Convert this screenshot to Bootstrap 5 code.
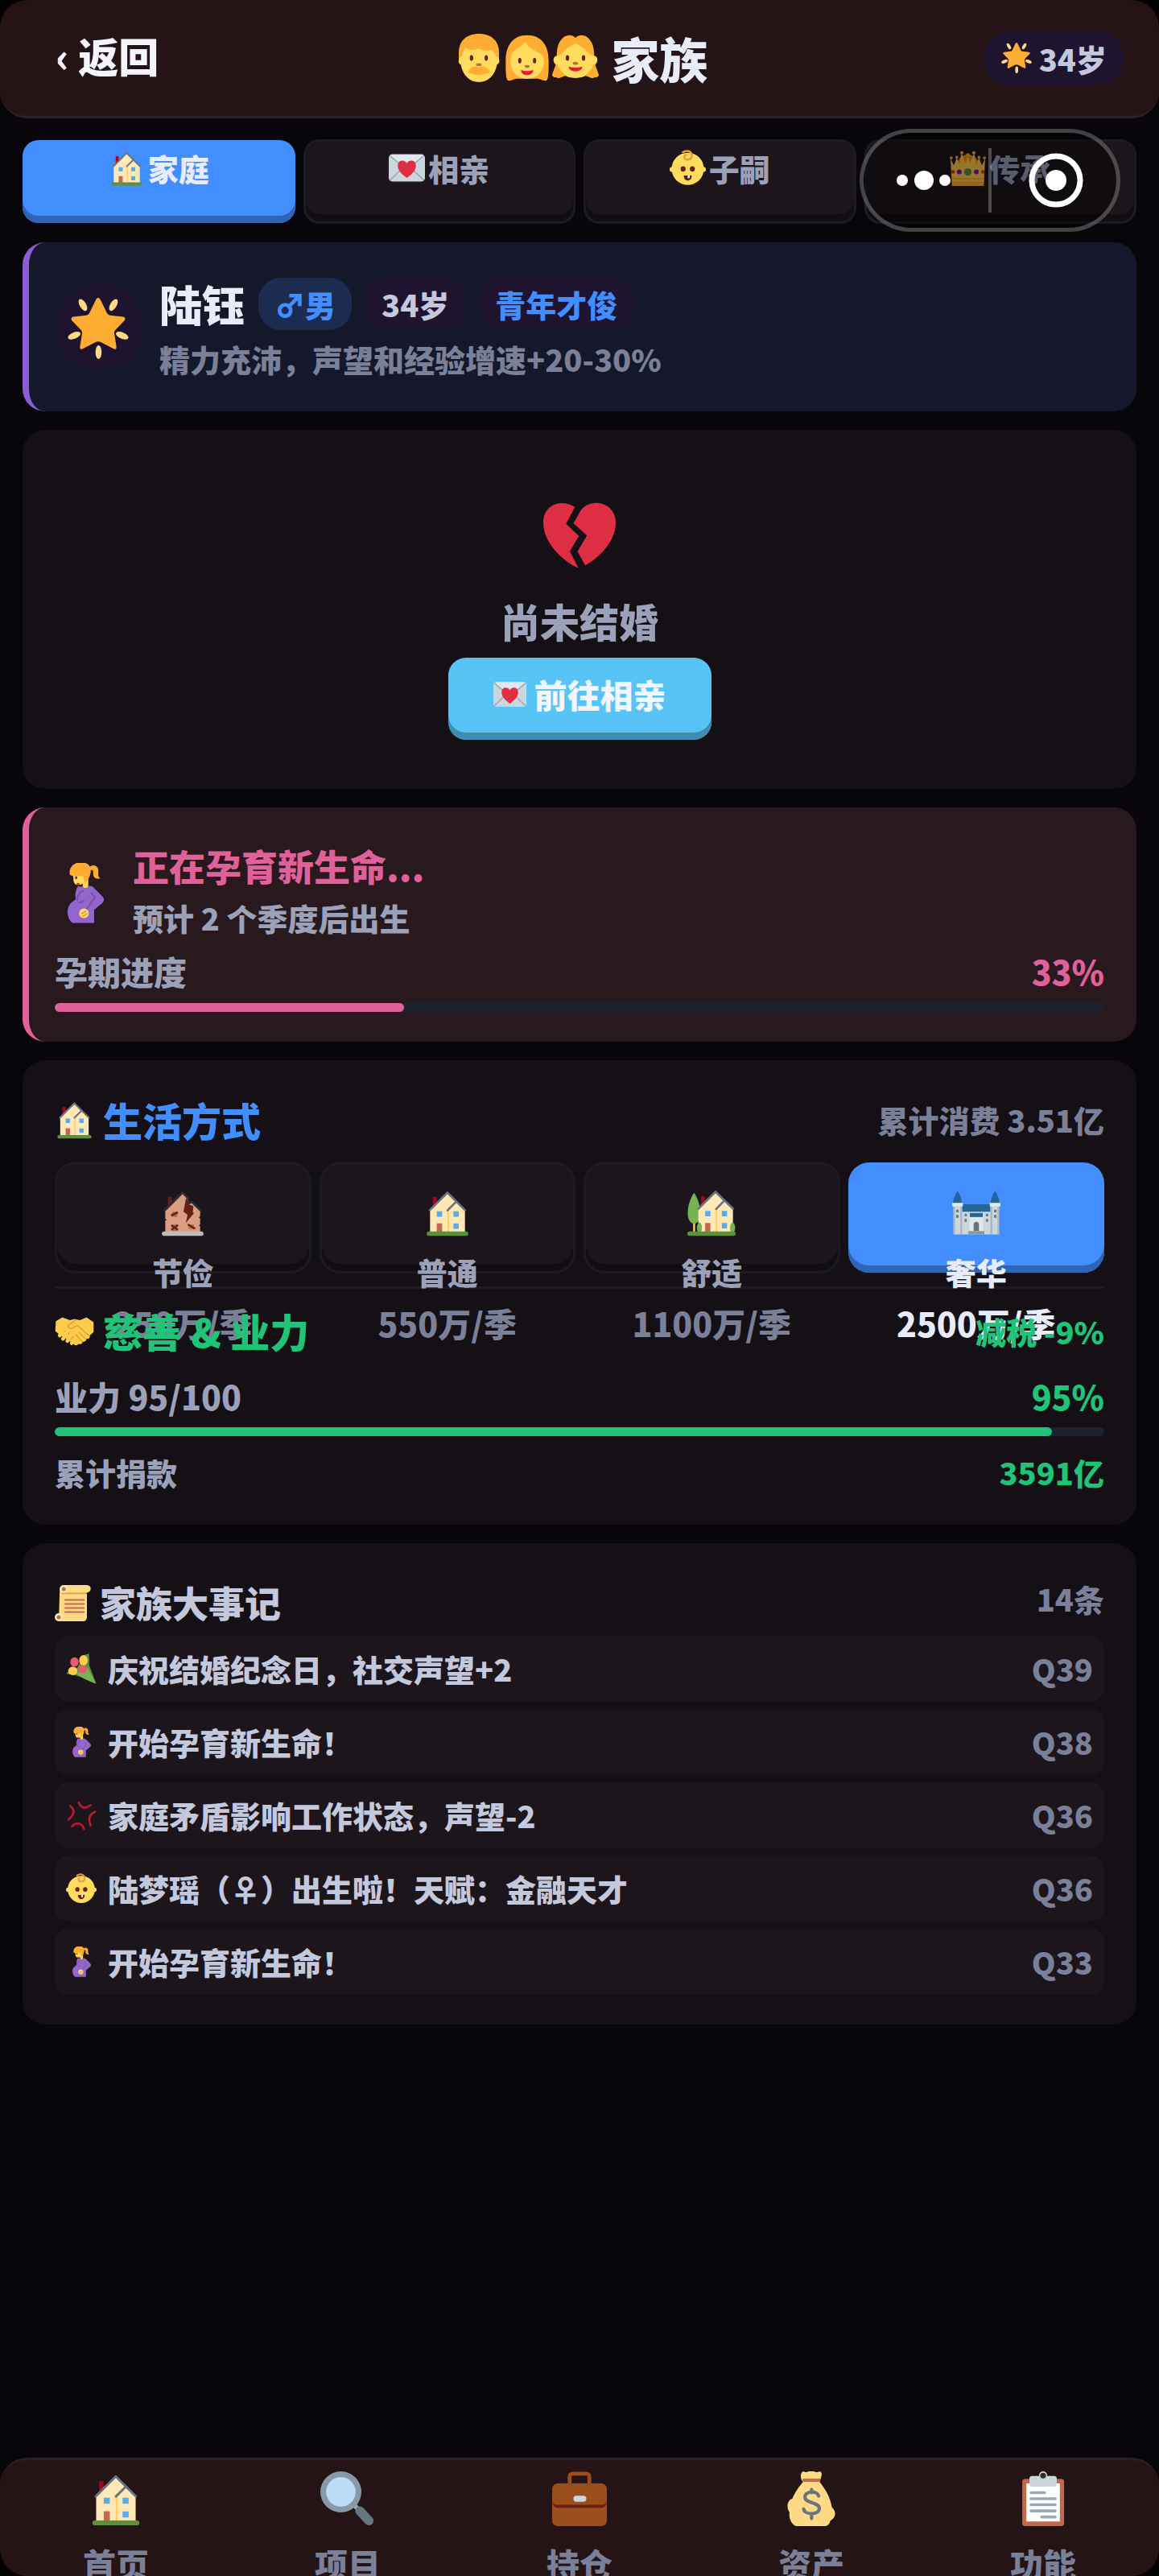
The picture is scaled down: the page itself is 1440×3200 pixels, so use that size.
<!DOCTYPE html>
<html lang="zh-CN">
<head>
<meta charset="utf-8">
<meta name="viewport" content="width=device-width, initial-scale=1">
<title>家族</title>
<link href="https://cdn.jsdelivr.net/npm/bootstrap@5.3.0/dist/css/bootstrap.min.css" rel="stylesheet">
<style>
:root{--blue:#428eff;--green:#20c478;--pink:#e0609a;--hi:#e8ebf8;--soft:#c3c8dd;--mid:#9ca1ba;--dim:#7b8099;--line:#1b1b27;--raise:#1c151b;--f-sm:38px;--f-md:41px;--f-lg:45px;--f-xl:49px}
body{background:#000;color:var(--hi);font-family:"Noto Sans CJK SC",sans-serif;font-weight:900;font-size:var(--f-sm);line-height:1.5}
.fw-heavy{font-weight:900}
.screen{min-height:100vh;background:#08060b}
.top-shade{background:linear-gradient(#000 50%,transparent 50%)}
.bottom-shade{background:linear-gradient(transparent 50%,#000 50%)}
.topbar,.bottombar{height:147px;background:#251416;border-radius:34px}
.topbar{border-bottom:3px solid #2a2029;padding:0 45px}
.side{flex:1 1 0}
.ico{width:1em;height:1em;flex:none;display:block}
.back{background:none;border:0;color:#f4f5fc;font-weight:900;font-size:50px;line-height:68px;padding:0 24px 8px}
.title{font-size:60px;line-height:84px;gap:15px;padding-left:4px}
.pill{font-size:var(--f-sm);line-height:65px;padding:0 20px;border-radius:28px;background:#1e1430;color:var(--soft);gap:9px}
.pill-male{background:#1b2c50;color:var(--blue)}
.t-blue{color:var(--blue)}.t-green{color:var(--green)}.t-pink{color:var(--pink)}.t-mid{color:var(--mid)}.t-dim{color:var(--dim)}.t-soft{color:var(--soft)}
.f-md{font-size:var(--f-md)}.f-lg{font-size:var(--f-lg)}.f-xl{font-size:var(--f-xl)}
.content{padding:26px 28px 0;gap:23px}
.tabs,.options{gap:10px}
.tile{flex:1 1 0;min-width:0;background:var(--raise);border:3px solid var(--line);color:var(--mid);font-weight:900;box-shadow:inset 0 -9px #110d11}
.tile.on{background:var(--blue);border-width:0;margin:1px 0;color:var(--hi);box-shadow:inset 0 -9px #2f65b4}
.tab{height:105px;border-radius:20px;padding:4px 0 0;font-size:var(--f-sm);line-height:57px;gap:4px}
.tab.on{height:103px;padding:6px 3px 0}
.tab .ico{width:45px;height:45px;margin-top:6px}
.panel{background:#151015;border-radius:28px;padding:37px 40px}
.edge{border-left:8px solid;padding-left:32px}
.me{background:#15182a;border-color:#8b5cd6}
.baby{background:#27191e;border-color:var(--pink)}
.avatar{width:108px;height:108px;border-radius:50%;background:#1e1430;font-size:76px;padding-top:4px}
.gap-me{gap:22px}
.nm{font-size:53px;line-height:79px}
.pills{gap:17px}
.single{padding:60px 40px 61px}
.heart{font-size:90px;padding:26px 0}
.cta{background:#58c3f5;border:0;border-radius:22px;box-shadow:inset 0 -9px #3e8cb0;color:#f3f6fd;font-weight:900;font-size:var(--f-md);line-height:91px;padding:0 56px 11px;gap:10px;margin-top:12px}
.expect{line-height:71px}
.carry{font-size:75px;margin-top:10px}
.meter{height:11px;border-radius:6px;background:#1e2130;margin-top:8px}
.meter .progress-bar{border-radius:6px}
.bar-pink{background:var(--pink)}.bar-green{background:var(--green)}
.row-gap{margin-top:8px}
.options{margin-top:16px}
.option{height:139px;border-radius:26px;padding:15px 0 0;font-size:var(--f-sm);line-height:57px}
.option.on{height:137px;padding:17px 3px 0}
.option .ico{width:60px;height:60px;margin:15px 0}
.price{font-size:var(--f-md);line-height:62px;margin-top:4px}
.rule{height:3px;background:var(--line);margin:16px 0 15px}
.karma{margin-top:14px}
.sec{gap:11px}
.chronicle{padding-top:40px}
.log{gap:9px;margin-top:7px}
.entry{background:var(--raise);border-radius:16px;padding:0 14px;line-height:82px;gap:14px}
.bottombar{border-top:3px solid #2a2029;overflow:hidden}
.dock{flex:1 1 0;color:var(--dim);font-size:var(--f-md);line-height:62px;text-decoration:none;padding-top:14px}
.dock .ico{width:68px;height:68px;margin-bottom:15px}
.capsule{position:absolute;top:160px;right:48px;width:324px;height:128px;border:5px solid rgba(255,255,255,.25);border-radius:64px;background:rgba(0,0,0,.42)}
.capsule svg{width:100%;height:100%;display:block}
</style>
</head>
<body>
<svg width="0" height="0" class="position-absolute" aria-hidden="true">
<defs>
<symbol id="house" viewBox="0 0 36 36"><path fill="#A0041E" d="M7 6.500h3V14H7z"/><path fill="#FFE8B6" d="M5 16.500L17.900 3.800 24.500 10.500 31 16.500V33H5z"/><path fill="#FFCC4D" d="M18 16h1v17h-1z"/><path fill="none" stroke="#66757F" stroke-width="1.600" stroke-linecap="round" stroke-linejoin="round" d="M4.800 16.400L17.900 3.300 31.100 16.400M24.300 10.300L18 16.500"/><path fill="#55ACEE" d="M10 17.300h4v4h-4zM22.400 17.300h4v4h-4zM22.400 26.300h4v4h-4z"/><path fill="#C1694F" d="M10 26.200h4V33h-4z"/><rect x="2.500" y="32.300" width="31" height="3.200" rx="1.600" fill="#5C913B"/></symbol>
<symbol id="ruin" viewBox="0 0 36 36"><path fill="#662113" d="M7 6.500h3V14H7z"/><path fill="#D99E82" d="M5 16.500L17.900 3.500l4 4v4l3-1L31 16.500V21l-1.200.7 1.200.8V27l-1 .7 1 .8V33H5V24l1.500-.5L5 23z"/><path fill="none" stroke="#292F33" stroke-width="1.700" stroke-linecap="round" stroke-linejoin="round" d="M4.800 16.300L17.900 3.300 22 7.300v4l3-1 6.100 6"/><path fill="#662113" d="M20.500 7l1.800 5 3.700 1.300-.5 4.700 1 .5L20.300 26l1.300-6.200-3-2.300z"/><g fill="#C1694F"><path d="M10 17.500h4v4h-4zM22.400 27h4v3.500h-4zM10 27h4v5h-4z"/></g><path stroke="#662113" stroke-width="1.500" d="M9.400 20.400l5-2.400M21.800 27l5.400 3.200M9.500 27.600l5 3.500M9.500 31l5-3.600"/><rect x="2.500" y="32.300" width="31" height="3.200" rx="1.600" fill="#BBB"/></symbol>
<symbol id="garden" viewBox="0 0 36 36"><path fill="#FFCC4D" d="M4.300 24h1.500v9H4.300z"/><path fill="#77B255" d="M5 3.500C7.500 7 9.700 13 9.700 18.500S7.500 26.500 5 26.500.3 24 .3 18.500 2.500 7 5 3.500z"/><path fill="#A0041E" d="M10.300 6h2.600v7h-2.600z"/><path fill="#FFE8B6" d="M8.200 15.500L21 3.500l13 12V33H8.200z"/><path fill="#FFCC4D" d="M21.200 16h1v17h-1z"/><path fill="none" stroke="#66757F" stroke-width="1.600" stroke-linecap="round" stroke-linejoin="round" d="M8.200 15.300L21 2.700l13 12.600M27.300 9.500L21.500 15.500"/><path fill="#55ACEE" d="M13.300 17h3.900v4h-3.900zM25.700 17h3.900v4h-3.900zM25.700 26h3.900v4h-3.900z"/><path fill="#C1694F" d="M13.300 26h3.900v7h-3.900z"/><ellipse cx="9" cy="29.500" rx="1.900" ry="3.800" fill="#77B255"/><ellipse cx="33.700" cy="29.500" rx="1.900" ry="3.800" fill="#77B255"/><rect x="0" y="32.300" width="36" height="3.200" rx="1.600" fill="#5C913B"/></symbol>
<symbol id="castle" viewBox="0 0 36 36"><path fill="#226699" d="M4 2C6 5 7.300 9 7.500 12h-7C.700 9 2 5 4 2zM32 2c2 3 3.300 7 3.500 10h-7c.2-3 1.500-7 3.500-10z"/><path fill="#CCD6DD" d="M1 12h6.500v5h21v-5H35v22.500H1z"/><path fill="#226699" d="M7.500 12h21v5.500h-21z"/><path fill="#AAB8C2" d="M1 14h1.300v20.500H1zM6 14h1.500v20.500H6zM28.500 14H30v20.500h-1.500zM33.700 14H35v20.500h-1.300z"/><path fill="#E1E8ED" d="M0 11h8v2.500H0zM28 11h8v2.500h-8zM13 21h10v11H13z"/><path fill="#226699" d="M13.200 18.500h9.600v3h-9.600z"/><path fill="#66757F" d="M3 16h1.800v2H3zM3 20h1.800v2H3zM31.200 16H33v2h-1.800zM31.200 20H33v2h-1.800zM9.300 19h1.600v2H9.300zM9.300 23h1.600v2H9.300zM25.200 19h1.600v2h-1.600zM25.200 23h1.600v2h-1.600zM16 32v-4.500a2 2.500 0 0 1 4 0V32z"/><path fill="#8899A6" d="M12 32h12v2.500H12z"/></symbol>
<symbol id="letter" viewBox="0 0 36 36"><rect y="4.500" width="36" height="27" rx="3.500" fill="#CCD6DD"/><path fill="#E1E8ED" d="M1 6c.7-1 1.500-1.500 2.500-1.500h29c1 0 1.800.5 2.500 1.500L18 20z"/><path stroke="#99AAB5" stroke-width="1.300" d="M1 5.800L18 20 35 5.800M1 30.500L14 18M35 30.500L22 18" fill="none"/><path fill="#DD2E44" d="M18 28c-5-3.500-9-7.500-9-12 0-6.500 7-6.500 9-2.500 2-4 9-4 9 2.500 0 4.500-4 8.500-9 12z"/></symbol>
<symbol id="babyface" viewBox="0 0 36 36"><circle cx="2.600" cy="19.500" r="2.600" fill="#FFDC5D"/><circle cx="33.400" cy="19.500" r="2.600" fill="#FFDC5D"/><ellipse cx="18" cy="19" rx="16" ry="16" fill="#FFDC5D"/><path fill="none" stroke="#EF9645" stroke-width="1.900" stroke-linecap="round" d="M13 2.500c5-3 9.500-.5 9 4-.5 4-7 4.500-7.500.8 0-1.500 1-2 1.800-1.800"/><ellipse cx="13.400" cy="19" rx="2.500" ry="2.700" fill="#662113"/><ellipse cx="22.600" cy="19" rx="2.500" ry="2.700" fill="#662113"/><path fill="#662113" d="M14 25.500h8c0 3-1.500 5-4 5s-4-2-4-5z"/><path fill="#fff" d="M18 25.500h2v2.700h-2z"/></symbol>
<symbol id="crown" viewBox="0 0 36 36"><path fill="#F4900C" d="M7 12l4-5 7-3 7 3 5 6-2 8H8z"/><path fill="#FFCC4D" d="M2 33L.8 8.500l3.200 7 3-7.500 2.500 7L11.700 3l4 10.500L18 6l2.300 7.500L24.300 3l2.200 12L29 8l3 7.500 3.200-7L34 33z"/><g fill="#FFAC33"><circle cx="1.500" cy="8" r="1.500"/><circle cx="7" cy="7.500" r="1.500"/><circle cx="12" cy="3" r="1.700"/><circle cx="18" cy="5" r="1.700"/><circle cx="24" cy="3" r="1.700"/><circle cx="29" cy="7.500" r="1.500"/><circle cx="34.500" cy="8" r="1.500"/><path d="M2 28h32v1.500H2zM2 31.500h32V36H2z"/></g><circle cx="18" cy="22" r="3.700" fill="#5C913B"/><circle cx="9.500" cy="22" r="2.400" fill="#9400D3"/><circle cx="26.500" cy="22" r="2.400" fill="#9400D3"/><circle cx="3.200" cy="22" r="1.800" fill="#DD2E44"/><circle cx="32.800" cy="22" r="1.800" fill="#DD2E44"/></symbol>
<symbol id="star" viewBox="0 0 36 36"><path fill="#FFAC33" d="M18 0c.8 0 1.200.8 1.600 1.700l3.400 7c.5.900 1 1.500 2 1.600l7.500.8c1.600.2 1.700 1.500.7 2.500l-5 5.200c-.7.700-.8 1.400-.7 2.300l1.200 7.400c.2 1.600-.6 2.100-1.900 1.400L20 26.300c-1.500-.8-2.500-.8-4 0l-6.800 3.600c-1.300.7-2.100.2-1.900-1.400l1.200-7.400c.1-.9 0-1.600-.7-2.300l-5-5.200c-1-1-.9-2.300.7-2.500l7.500-.8c1-.1 1.500-.7 2-1.600l3.400-7C16.800.8 17.200 0 18 0z"/><g fill="#FFD983"><ellipse cx="9" cy="4.200" rx="1.900" ry="3.900" transform="rotate(-30 9 4.200)"/><ellipse cx="27" cy="4.200" rx="1.900" ry="3.900" transform="rotate(30 27 4.200)"/><ellipse cx="3.900" cy="22.200" rx="1.900" ry="3.900" transform="rotate(68 3.900 22.200)"/><ellipse cx="32.100" cy="22.200" rx="1.900" ry="3.900" transform="rotate(-68 32.100 22.200)"/><ellipse cx="18.200" cy="32" rx="1.800" ry="4"/></g></symbol>
<symbol id="man" viewBox="0 0 36 36"><path fill="#FFAC33" d="M18 0C8 0 3 6 3 14v7h30v-7C33 6 28 0 18 0z"/><path fill="#FFDC5D" d="M5 17c1-2 2-6 3-7 3 3 7 2 10 1 3 2 6 2 9 1 2 1 3 3 4 5 3 1 3 5 .5 6C30 31 25 36 18 36S6 31 4.500 23C2 22 2.500 18 5 17z"/><path fill="#FFAC33" d="M18 25c3-1.500 7-.5 8 4-1.500.8-2.500 0-3.500 1.300-1.200-.8-2 .6-3 .2-.8.5-2.200.5-3 0-1 .4-1.800-1-3-.2C12.500 29 11.500 29.800 10 29c1-4.500 5-5.500 8-4z"/><ellipse cx="12.500" cy="18" rx="1.300" ry="2.100" fill="#662113"/><ellipse cx="23.500" cy="18" rx="1.300" ry="2.100" fill="#662113"/><ellipse cx="18" cy="23" rx="2.200" ry="1.100" fill="#C1694F"/></symbol>
<symbol id="woman" viewBox="0 0 36 36"><path fill="#FFAC33" d="M18 1C7 1 2 9 2 20c0 6 0 12 1 14 1 2 3 .5 7-.5h16c4 1 6 2.500 7 .5 1-2 1-8 1-14C34 9 29 1 18 1z"/><path fill="#FFDC5D" d="M5.500 20c0-5 2-7 5-9 3-1.800 5-3 6-5 2 4 6 6 9 7.500 3 1.500 5 3 5 6.500 0 8-5 13.500-12.500 13.500S5.500 28 5.500 20z"/><ellipse cx="12.500" cy="20" rx="1.200" ry="2.100" fill="#662113"/><ellipse cx="23.500" cy="20" rx="1.200" ry="2.100" fill="#662113"/><ellipse cx="18" cy="24.300" rx="1.900" ry="1.100" fill="#C1694F"/><path fill="#DF1F32" d="M13.500 27c3 1 6 1 9 0 .3 2-1.700 3.800-4.500 3.800S13.200 29 13.500 27z"/></symbol>
<symbol id="girl" viewBox="0 0 36 36"><path fill="#FFAC33" d="M18 3C21 0 26 .500 29 5c2.500 3 3 8 3 13 0 5 2.500 9 3.500 13-1 1-1.500 1.500-2.500 1.500-.8-1-1.500.5-2.500.5L26 26H10l-4.500 7c-1 0-1.700-1.500-2.500-.5-1 0-1.500-.5-2.500-1.500 1-4 3.500-8 3.500-13 0-5 .5-10 3-13 3-4.500 8-5 11-2z"/><path fill="#FFDC5D" d="M3.500 16.500c2 0 5-2 7.500-5 2-2 5-3 7-4.500 2 1.500 5 2.500 7 4.500 2.500 3 5.500 5 7.500 5 2.500 1 2.500 5 0 6.500-1.500 6-7 10-14.500 10S5 29 3.500 23C1 21.500 1 17.500 3.500 16.500z"/><path fill="#FFAC33" d="M4 22c2 4 4 7 7 9l-5 2c-2 0-4-1-4.500-3zM32 22c-2 4-4 7-7 9l5 2c2 0 4-1 4.500-3z"/><ellipse cx="12" cy="18" rx="1.300" ry="2.100" fill="#662113"/><ellipse cx="24" cy="18" rx="1.300" ry="2.100" fill="#662113"/><ellipse cx="18" cy="22" rx="2" ry="1.100" fill="#C1694F"/><path fill="#DF1F32" d="M13 24.500c3.300 1 6.700 1 10 0 .3 2-2 3.500-5 3.500s-5.300-1.500-5-3.500z"/></symbol>
<symbol id="broken" viewBox="0 0 36 36"><path fill="#DD2E44" d="M15.700 4L11.300 12.300l6.400 6L13.200 26l4.300 8.300C8 30 0 20.500 0 11.800 0 2.300 9.500-.2 15.700 4zM18.800 5.300L15 12l6.700 6.100L17 26l3.800 6.900C29 28.500 36 20 36 11.800 36 1.500 24-1 18.800 5.300z"/></symbol>
<symbol id="mother" viewBox="0 0 36 36"><path fill="#FFAC33" d="M20.500 3c1.500-3 6-1.500 5.500 2 0 2-.3 3 1.200 4.200C24 10 22.500 8 23 5.500c0-1.500-1-1.700-2.500-.5z"/><path fill="#FFDC5D" d="M10.500 6l9.500-2v10.500c0 1.800-3.300 1.800-3.300 0v-2c-4 1.800-6-.5-5.500-3.500z"/><path fill="#FFAC33" d="M9 7C7.500-1.500 20-2.500 21.300 3c.8 3.500-1 6.500-3 9.200-1-1.200-.8-3.200-1.300-4.700-1 1-2 .5-2.500 0-1.500 1-4 .5-5.500-.5z"/><path fill="#9266CC" d="M13.500 14h3c1.500 1.500 3 1 4-.3 1.500 0 2.500.5 3.200 1.500l5 5c1 1.200.8 2.600-.2 3.600L23.500 28v7.700H10.500c-3-2.500-3.700-7.500-1.800-10.500 1.200-2 2.800-2.500 3.800-3.700-.5-2.700 0-5 1-7.500z"/><path fill="none" stroke="#7450A8" stroke-width=".9" d="M13.300 22.500c0-3 1.500-5.500 4-6M14 23.500c2 0 3-.6 3.500-1.500M21.500 17.500l2.500 3-5 7"/><circle cx="17.400" cy="30" r="2.900" fill="#FFDC5D"/><path d="M15.800 30.500l3-2M16.500 32l3-2" stroke="#EF9645" stroke-width=".8"/><ellipse cx="12.800" cy="8.800" rx=".6" ry=".9" fill="#662113"/><path fill="#DF1F32" d="M13 12h1.800v1H13.300z"/></symbol>
<symbol id="shake" viewBox="0 0 36 36"><path fill="#FFCC4D" d="M1 9l6-3.500L14 8l4-1 5 1 6-2.500L35.500 10v9L32 22c.5 2-1 3.500-3 3-.2 2-1.500 3-3.500 2.700-.3 2-2 2.800-3.800 2-1.200 1.800-3.700 1.500-4.700-.2L4 21 .5 18z"/><path fill="none" stroke="#E29A2D" stroke-width="1" stroke-linecap="round" d="M19 8l-7 5c0 3 4 3.500 6 1l3-1 10 9M22 19l6 6M19 21l6 6.500M9 18l-4 5M13 20l-5 6M17 23l-5 5"/><path fill="none" stroke="#FFCC4D" stroke-width="3.400" stroke-linecap="round" d="M7 19l-2.500 3M10.500 21l-3 4M14 23l-2.500 4M17.500 26l-2 3"/></symbol>
<symbol id="scroll" viewBox="0 0 36 36"><path fill="#FFD983" d="M5 4c0-2 2-4 4-4h23c5 0 5 7 0 7.500V32c0 2-1.500 4-3.500 4H4z"/><path fill="#E39F3D" d="M10 7.500h22V9H7V7z"/><circle cx="9" cy="4" r="4" fill="#FFE8B6"/><circle cx="9" cy="4" r="2" fill="#C1694F"/><circle cx="4" cy="32" r="4" fill="#FFE8B6"/><circle cx="4" cy="32" r="2" fill="#C1694F"/><path stroke="#C1694F" stroke-width="1.700" stroke-linecap="round" d="M10.500 14.800h18.500M10.500 18.800h18.500M10.500 22.800h18.500M10.500 26.800h18.500"/></symbol>
<symbol id="tulips" viewBox="0 0 36 36"><path fill="#5C913B" d="M0 24c4-3 5-9 13-7L20 4c2-3 5-3 7-4 0 5 1 8 0 13l8.500 22.500C26 33 17 25 0 24z"/><path fill="#77B255" d="M12 24l13-8 10.500 19.500C27 33 19 29 12 24z"/><g fill="#EA596E"><ellipse cx="10" cy="10" rx="5" ry="5.500"/><ellipse cx="19.500" cy="18.500" rx="5" ry="5"/></g><g fill="#FFCC4D"><ellipse cx="20.500" cy="8" rx="5" ry="6"/><ellipse cx="8" cy="20.500" rx="5.500" ry="5"/></g></symbol>
<symbol id="anger" viewBox="0 0 36 36"><path fill="none" stroke="#BE1931" stroke-width="2.500" stroke-linecap="round" stroke-linejoin="round" d="M15 3c2 6 8 8 14 3M5 7c6 5 5 10-2 16M34 14c-7 3-8 9-5 16M7 31c6-6 12-4 14 3"/></symbol>
<symbol id="lens" viewBox="0 0 36 36"><path stroke="#99AAB5" stroke-width="3" d="M20 20l6 6"/><path stroke="#66757F" stroke-width="6" stroke-linecap="round" d="M26 26l6 6.500"/><circle cx="13.500" cy="13.500" r="13.500" fill="#8899A6"/><circle cx="13.500" cy="13.500" r="9.700" fill="#BBDDF5"/></symbol>
<symbol id="brief" viewBox="0 0 36 36"><path fill="none" stroke="#9B4E1B" stroke-width="2.500" d="M11.500 9V3.500a2 2 0 0 1 2-2h9a2 2 0 0 1 2 2V9"/><rect y="8" width="36" height="28" rx="3.500" fill="#9B4E1B"/><path fill="#662113" d="M0 19c0 3 1.500 5 4 5h28c2.500 0 4-2 4-5z"/><path fill="#9B4E1B" d="M0 12h36v7c0 2-1.500 3-4 3H4c-2.500 0-4-1-4-3z"/><rect x="14" y="16" width="8.500" height="4" rx="2" fill="#CCD6DD"/></symbol>
<symbol id="money" viewBox="0 0 36 36"><path fill="#FFD983" d="M11.500 1c1.500-1.800 2.500 0 3.500-.5 2-.8 4-.8 6 0 1 .5 2.500-1.300 3.700.5.5 2-.7 3.500-1.200 6 4 5 7 10 8 16.500 3.300 3 2.700 7-1 9-.3 2-2 3.500-3.500 3.500H8c-3-1-5-5-4.300-9C1.500 24 2 19 5.500 18 7 14 10 10 12.500 7c-1.500-2-1.800-4-1-6z"/><path fill="#C1694F" d="M12.300 4.700h11.400v2.200H12.300z"/><path fill="none" stroke="#66757F" stroke-width="2.200" stroke-linecap="round" d="M22.800 16.200c-.8-3.700-9-3.500-9 .7 0 4.400 9.500 3 9.500 7.500 0 4.300-9.500 4.600-10.300.4M18.200 12v2M18.200 28v3"/></symbol>
<symbol id="clip" viewBox="0 0 36 36"><rect x="4.300" y="5" width="27.500" height="31" rx="1.800" fill="#C1694F"/><path fill="#fff" d="M7 8h22v25H7z"/><rect x="9" y="3" width="18" height="7" rx="1.800" fill="#CCD6DD"/><circle cx="18" cy="2.700" r="2.700" fill="#CCD6DD"/><circle cx="18" cy="2.800" r="1.900" fill="#292F33"/><path stroke="#99AAB5" stroke-width="1.900" stroke-linecap="round" d="M10 14h9M10 18h16M10 22h16M10 26h16M17 30h9"/></symbol>
</defs>
</svg>

<div class="screen position-relative d-flex flex-column">
  <div class="top-shade">
  <header class="topbar d-flex align-items-center">
    <div class="side"><button type="button" class="back">‹ 返回</button></div>
    <h1 class="title d-flex align-items-center fw-heavy m-0"><span class="d-flex"><svg class="ico"><use href="#man"/></svg><svg class="ico"><use href="#woman"/></svg><svg class="ico"><use href="#girl"/></svg></span>家族</h1>
    <div class="side d-flex justify-content-end"><span class="pill d-flex align-items-center"><svg class="ico"><use href="#star"/></svg>34岁</span></div>
  </header>
  </div>

  <main class="content d-flex flex-column">
    <nav class="tabs d-flex">
      <button type="button" class="tile tab on d-flex justify-content-center align-items-start"><svg class="ico"><use href="#house"/></svg>家庭</button>
      <button type="button" class="tile tab d-flex justify-content-center align-items-start"><svg class="ico"><use href="#letter"/></svg>相亲</button>
      <button type="button" class="tile tab d-flex justify-content-center align-items-start"><svg class="ico"><use href="#babyface"/></svg>子嗣</button>
      <button type="button" class="tile tab d-flex justify-content-center align-items-start"><svg class="ico"><use href="#crown"/></svg>传承</button>
    </nav>

    <section class="panel edge me d-flex align-items-center gap-me">
      <div class="avatar d-flex align-items-center justify-content-center flex-shrink-0"><svg class="ico"><use href="#star"/></svg></div>
      <div>
        <div class="pills d-flex align-items-center"><span class="nm">陆钰</span><span class="pill pill-male">♂男</span><span class="pill">34岁</span><span class="pill t-blue">青年才俊</span></div>
        <div class="t-dim">精力充沛，声望和经验增速+20-30%</div>
      </div>
    </section>

    <section class="panel single d-flex flex-column align-items-center">
      <div class="heart"><svg class="ico"><use href="#broken"/></svg></div>
      <div class="f-xl t-mid lh-sm py-1">尚未结婚</div>
      <button type="button" class="cta d-flex align-items-center"><svg class="ico"><use href="#letter"/></svg>前往相亲</button>
    </section>

    <section class="panel edge baby">
      <div class="d-flex align-items-center gap-me">
        <div class="carry"><svg class="ico"><use href="#mother"/></svg></div>
        <div><div class="f-lg expect t-pink">正在孕育新生命...</div><div class="t-mid">预计 2 个季度后出生</div></div>
      </div>
      <div class="row-gap d-flex justify-content-between f-md"><span class="t-mid">孕期进度</span><span class="t-pink">33%</span></div>
      <div class="progress meter" role="progressbar" aria-label="孕期进度" aria-valuenow="33" aria-valuemin="0" aria-valuemax="100"><div class="progress-bar bar-pink" style="width:33.3%"></div></div>
    </section>

    <section class="panel">
      <div class="d-flex justify-content-between align-items-center">
        <h2 class="sec f-xl t-blue d-flex align-items-center fw-heavy m-0 lh-base"><svg class="ico"><use href="#house"/></svg>生活方式</h2><span class="t-dim">累计消费 3.51亿</span>
      </div>
      <div class="options d-flex">
        <button type="button" class="tile option d-flex flex-column align-items-center"><svg class="ico"><use href="#ruin"/></svg><span>节俭</span><span class="price t-dim">250万/季</span></button>
        <button type="button" class="tile option d-flex flex-column align-items-center"><svg class="ico"><use href="#house"/></svg><span>普通</span><span class="price t-dim">550万/季</span></button>
        <button type="button" class="tile option d-flex flex-column align-items-center"><svg class="ico"><use href="#garden"/></svg><span>舒适</span><span class="price t-dim">1100万/季</span></button>
        <button type="button" class="tile option on d-flex flex-column align-items-center"><svg class="ico"><use href="#castle"/></svg><span>奢华</span><span class="price">2500万/季</span></button>
      </div>
      <div class="rule"></div>
      <div class="d-flex justify-content-between align-items-center">
        <h2 class="sec f-xl t-green d-flex align-items-center fw-heavy m-0 lh-base"><svg class="ico"><use href="#shake"/></svg>慈善 &amp; 业力</h2><span class="t-green">减税 -9%</span>
      </div>
      <div class="karma d-flex justify-content-between f-md"><span class="t-mid">业力 95/100</span><span class="t-green">95%</span></div>
      <div class="progress meter" role="progressbar" aria-label="业力" aria-valuenow="95" aria-valuemin="0" aria-valuemax="100"><div class="progress-bar bar-green" style="width:95%"></div></div>
      <div class="d-flex justify-content-between mt-3"><span class="t-mid">累计捐款</span><span class="t-green">3591亿</span></div>
    </section>

    <section class="panel chronicle">
      <div class="d-flex justify-content-between">
        <h2 class="sec f-lg t-soft d-flex align-items-center fw-heavy m-0 lh-base"><svg class="ico"><use href="#scroll"/></svg>家族大事记</h2><span class="t-dim">14条</span>
      </div>
      <ul class="log list-unstyled d-flex flex-column mb-0">
        <li class="entry d-flex align-items-center t-soft"><svg class="ico"><use href="#tulips"/></svg>庆祝结婚纪念日，社交声望+2<span class="ms-auto t-dim">Q39</span></li>
        <li class="entry d-flex align-items-center t-soft"><svg class="ico"><use href="#mother"/></svg>开始孕育新生命！<span class="ms-auto t-dim">Q38</span></li>
        <li class="entry d-flex align-items-center t-soft"><svg class="ico"><use href="#anger"/></svg>家庭矛盾影响工作状态，声望-2<span class="ms-auto t-dim">Q36</span></li>
        <li class="entry d-flex align-items-center t-soft"><svg class="ico"><use href="#babyface"/></svg>陆梦瑶（♀）出生啦！天赋：金融天才<span class="ms-auto t-dim">Q36</span></li>
        <li class="entry d-flex align-items-center t-soft"><svg class="ico"><use href="#mother"/></svg>开始孕育新生命！<span class="ms-auto t-dim">Q33</span></li>
      </ul>
    </section>
  </main>

  <div class="bottom-shade mt-auto">
  <nav class="bottombar d-flex">
    <a class="dock d-flex flex-column align-items-center" href="#"><svg class="ico"><use href="#house"/></svg>首页</a>
    <a class="dock d-flex flex-column align-items-center" href="#"><svg class="ico"><use href="#lens"/></svg>项目</a>
    <a class="dock d-flex flex-column align-items-center" href="#"><svg class="ico"><use href="#brief"/></svg>持仓</a>
    <a class="dock d-flex flex-column align-items-center" href="#"><svg class="ico"><use href="#money"/></svg>资产</a>
    <a class="dock d-flex flex-column align-items-center" href="#"><svg class="ico"><use href="#clip"/></svg>功能</a>
  </nav>
  </div>

  <div class="capsule"><svg viewBox="0 0 314 118"><g fill="#fff"><circle cx="48" cy="59" r="7"/><circle cx="75" cy="59" r="12"/><circle cx="101" cy="59" r="7"/><circle cx="239" cy="59" r="13"/></g><circle cx="239" cy="59" r="30" fill="none" stroke="#fff" stroke-width="7"/><path fill="rgba(255,255,255,.25)" d="M155 19h4v80h-4z"/></svg></div>
</div>
<script src="https://cdn.jsdelivr.net/npm/bootstrap@5.3.0/dist/js/bootstrap.bundle.min.js"></script>
</body>
</html>
